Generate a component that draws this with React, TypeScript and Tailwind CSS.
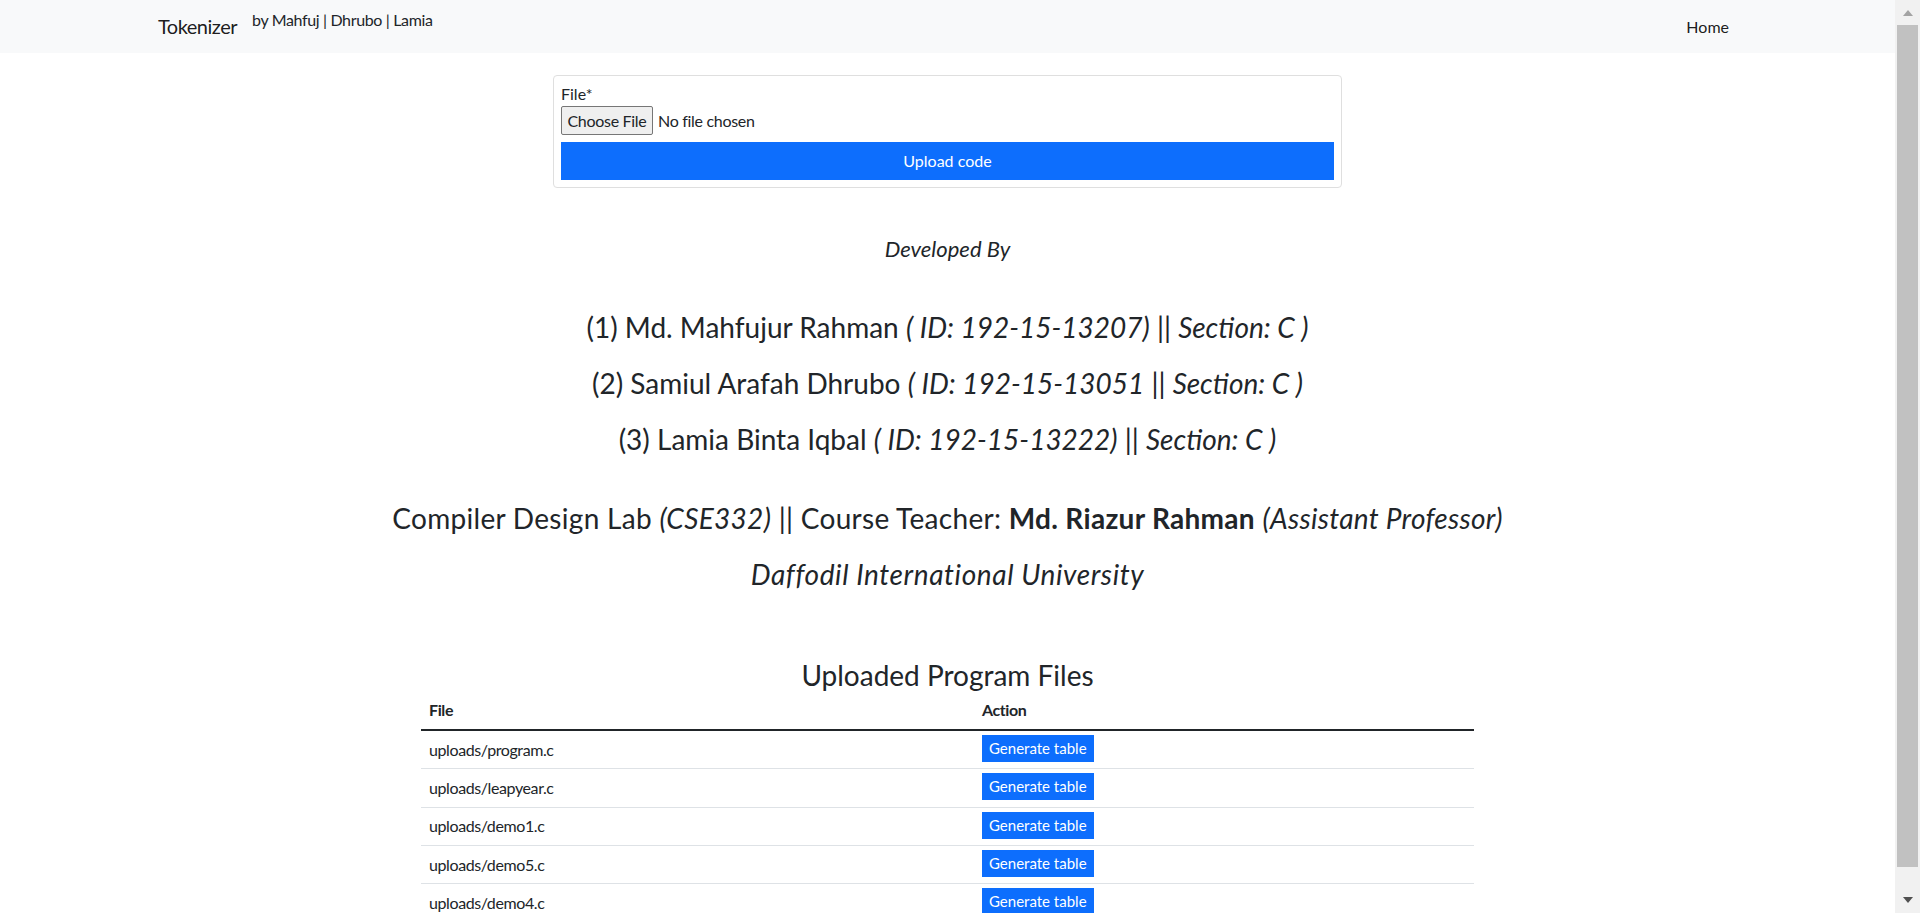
import React from "react";

/* -----------------------------
   DATA
----------------------------- */

const students = [
  { no: 1, name: "Md. Mahfujur Rahman", id: "192-15-13207)" },
  { no: 2, name: "Samiul Arafah Dhrubo", id: "192-15-13051" },
  { no: 3, name: "Lamia Binta Iqbal", id: "192-15-13222)" },
];

const files = [
  "uploads/program.c",
  "uploads/leapyear.c",
  "uploads/demo1.c",
  "uploads/demo5.c",
  "uploads/demo4.c",
];

/* -----------------------------
   PARTS
----------------------------- */

function Navbar() {
  return (
    <nav className="flex h-[53px] items-start bg-[#f8f9fa] pl-[158px] pr-[166px]">
      <a className="mt-[11px] text-[20px] leading-[30px] tracking-[-0.5px] text-black/90">
        Tokenizer
      </a>
      <span className="ml-[15px] mt-[8px] text-[16px] leading-[24px] tracking-[-0.35px]">
        by Mahfuj | Dhrubo | Lamia
      </span>
      <a className="ml-auto mt-[15px] text-[16px] leading-[24px] text-black/90">Home</a>
    </nav>
  );
}

function UploadCard() {
  return (
    <form className="mt-[22px] w-[789px] rounded-[4px] border border-[#dfdfdf] p-[7px]">
      <label className="block text-[16px] leading-[22px]">File*</label>
      <div className="mt-px flex h-[29px] items-center">
        <button
          type="button"
          className="h-[29px] w-[92px] rounded-[2px] border border-[#767676] bg-[#efefef] text-[16px] leading-none tracking-[-0.3px]"
        >
          Choose File
        </button>
        <span className="ml-[5px] text-[16px] tracking-[-0.3px]">No file chosen</span>
      </div>
      <button
        type="button"
        className="mt-[7px] block h-[38px] w-full bg-[#0d6efd] text-[16px] text-white"
      >
        Upload code
      </button>
    </form>
  );
}

function Credits() {
  return (
    <div className="flex flex-col items-center text-center">
      <p className="mt-[46px] text-[22px] leading-[30px] italic">Developed By</p>

      <div className="mt-[46px] flex flex-col gap-[22px]">
        {students.map((s) => (
          <p key={s.no} className="text-[28px] leading-[34px]">
            ({s.no}) {s.name} <i>( ID: {s.id}</i> || <i>Section: C )</i>
          </p>
        ))}
      </div>

      <p className="mt-[45px] text-[28px] leading-[34px] tracking-[0.3px]">
        Compiler Design Lab <i>(CSE332)</i> || Course Teacher:{" "}
        <b className="font-bold">Md. Riazur Rahman</b> <i>(Assistant Professor)</i>
      </p>
      <p className="mt-[22px] text-[28px] leading-[34px] tracking-[0.6px] italic">
        Daffodil International University
      </p>

      <h3 className="mt-[67px] text-[28px] leading-[34px]">Uploaded Program Files</h3>
    </div>
  );
}

function FilesTable() {
  return (
    <div className="mx-auto mb-[14px] w-[1053px] text-[16px] tracking-[-0.4px]">
      <div className="grid h-[39px] grid-cols-[553px_1fr] items-center border-b-2 border-[#212529] pb-[2px] font-bold">
        <div className="px-2">File</div>
        <div className="px-2">Action</div>
      </div>
      {files.map((f) => (
        <div
          key={f}
          className="grid h-[38.33px] grid-cols-[553px_1fr] border-b border-[#dee2e6]"
        >
          <div className="flex items-center px-2">{f}</div>
          <div className="px-2 pt-[4px]">
            <button
              type="button"
              className="h-[27px] bg-[#0d6efd] px-[7px] text-[15px] leading-[27px] tracking-normal text-white"
            >
              Generate table
            </button>
          </div>
        </div>
      ))}
    </div>
  );
}

function Scrollbar() {
  return (
    <aside className="flex h-full w-[25px] shrink-0 flex-col bg-[#f1f1f1]">
      <div className="flex h-[25px] items-center justify-center pt-px">
        <span className="h-0 w-0 border-x-[5.5px] border-b-[6px] border-x-transparent border-b-[#a3a3a3]" />
      </div>
      <div className="mx-[2px] h-[842px] bg-[#c1c1c1]" />
      <div className="flex-1" />
      <div className="flex h-[25px] items-center justify-center pb-px">
        <span className="h-0 w-0 border-x-[5.5px] border-t-[6px] border-x-transparent border-t-[#505050]" />
      </div>
    </aside>
  );
}

/* -----------------------------
   PAGE
----------------------------- */

export default function App() {
  return (
    <div className="flex h-screen bg-white font-['Lato',sans-serif] text-[#212529]">
      <div className="h-full flex-1 overflow-y-auto [scrollbar-width:none]">
        <Navbar />
        <main className="flex flex-col items-center">
          <UploadCard />
          <Credits />
        </main>
        <FilesTable />
      </div>
      <Scrollbar />
    </div>
  );
}
